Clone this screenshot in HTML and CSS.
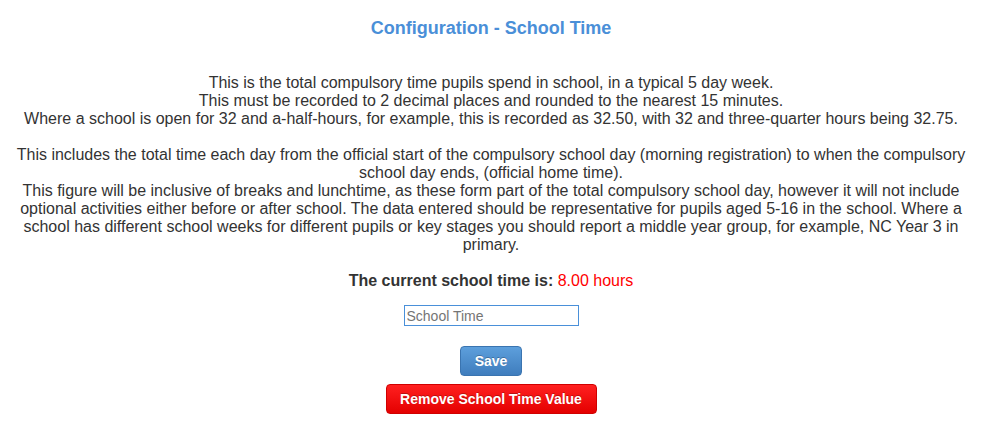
FILE: index.html
```html
<!DOCTYPE html>
<html lang="en">
<head>
    <meta charset="UTF-8">
    <meta name="viewport" content="width=device-width, initial-scale=1.0">
    <title>Configuration - School Time</title>
    <link rel="stylesheet" href="styles.css">
</head>
<body>
    <div class="page">
        <h1 class="title">Configuration - School Time</h1>

        <div class="info">
            <p>
                This is the total compulsory time pupils spend in school, in a typical 5 day week.<br>
                This must be recorded to 2 decimal places and rounded to the nearest 15 minutes.<br>
                Where a school is open for 32 and a-half-hours, for example, this is recorded as 32.50, with 32 and three-quarter hours being 32.75.
            </p>
            <p>
                This includes the total time each day from the official start of the compulsory school day (morning registration) to when the compulsory school day ends, (official home time).<br>
                This figure will be inclusive of breaks and lunchtime, as these form part of the total compulsory school day, however it will not include optional activities either before or after school. The data entered should be representative for pupils aged 5-16 in the school. Where a school has different school weeks for different pupils or key stages you should report a middle year group, for example, NC Year 3 in primary.
            </p>
        </div>

        <form class="time-form" id="timeForm">
            <div class="current">
                <b>The current school time is:</b> <span class="hours" id="currentTime">8.00 hours</span>
            </div>
            <input type="text" class="time-input" id="schoolTime" placeholder="School Time">
            <button type="submit" class="btn btn-save">Save</button>
            <button type="button" class="btn btn-remove" id="removeBtn">Remove School Time Value</button>
        </form>
    </div>
</body>
</html>
```

FILE: styles.css
```css
body {
    font-family: 'Liberation Sans', Arial, sans-serif;
    margin: 0;
    padding: 0;
    background-color: #ffffff;
    color: #333333;
}
.page {
    padding: 0 12px 20px 0;
}
.title {
    text-align: center;
    font-size: 18px;
    font-weight: bold;
    color: #4a8fd8;
    margin: 0;
    padding-top: 18px;
    line-height: 20px;
}
.info {
    margin: 36px 0 0 0;
    text-align: center;
    font-size: 16px;
    line-height: 18px;
}
.info p {
    margin: 0 0 18px 0;
}
.time-form {
    display: flex;
    flex-direction: column;
    align-items: center;
}
.current {
    font-size: 16px;
    line-height: 18px;
    margin-top: 0;
    margin-bottom: 15px;
}
.hours {
    color: #ff0000;
}
.time-input {
    width: 175px;
    height: 21px;
    box-sizing: border-box;
    border: 1px solid #4a90d9;
    padding: 1px 2px;
    font-family: 'Liberation Sans', Arial, sans-serif;
    font-size: 14px;
    color: #333333;
    margin: 0 0 20px 0;
    outline: none;
}
.time-input::placeholder {
    color: #757575;
}
.btn {
    height: 30px;
    box-sizing: border-box;
    border-radius: 4px;
    font-family: 'Liberation Sans', Arial, sans-serif;
    font-size: 14px;
    font-weight: bold;
    color: #ffffff;
    text-shadow: 0 -1px 0 rgba(0, 0, 0, 0.25);
    white-space: nowrap;
    cursor: pointer;
    padding: 0;
}
.btn-save {
    width: 62px;
    background: linear-gradient(to bottom, #5d9fdc, #3f7dbd);
    border: 1px solid #3a74b0;
    margin-bottom: 8px;
}
.btn-remove {
    width: 211px;
    background: linear-gradient(to bottom, #ff2020, #e40000);
    border: 1px solid #d00000;
}
```
